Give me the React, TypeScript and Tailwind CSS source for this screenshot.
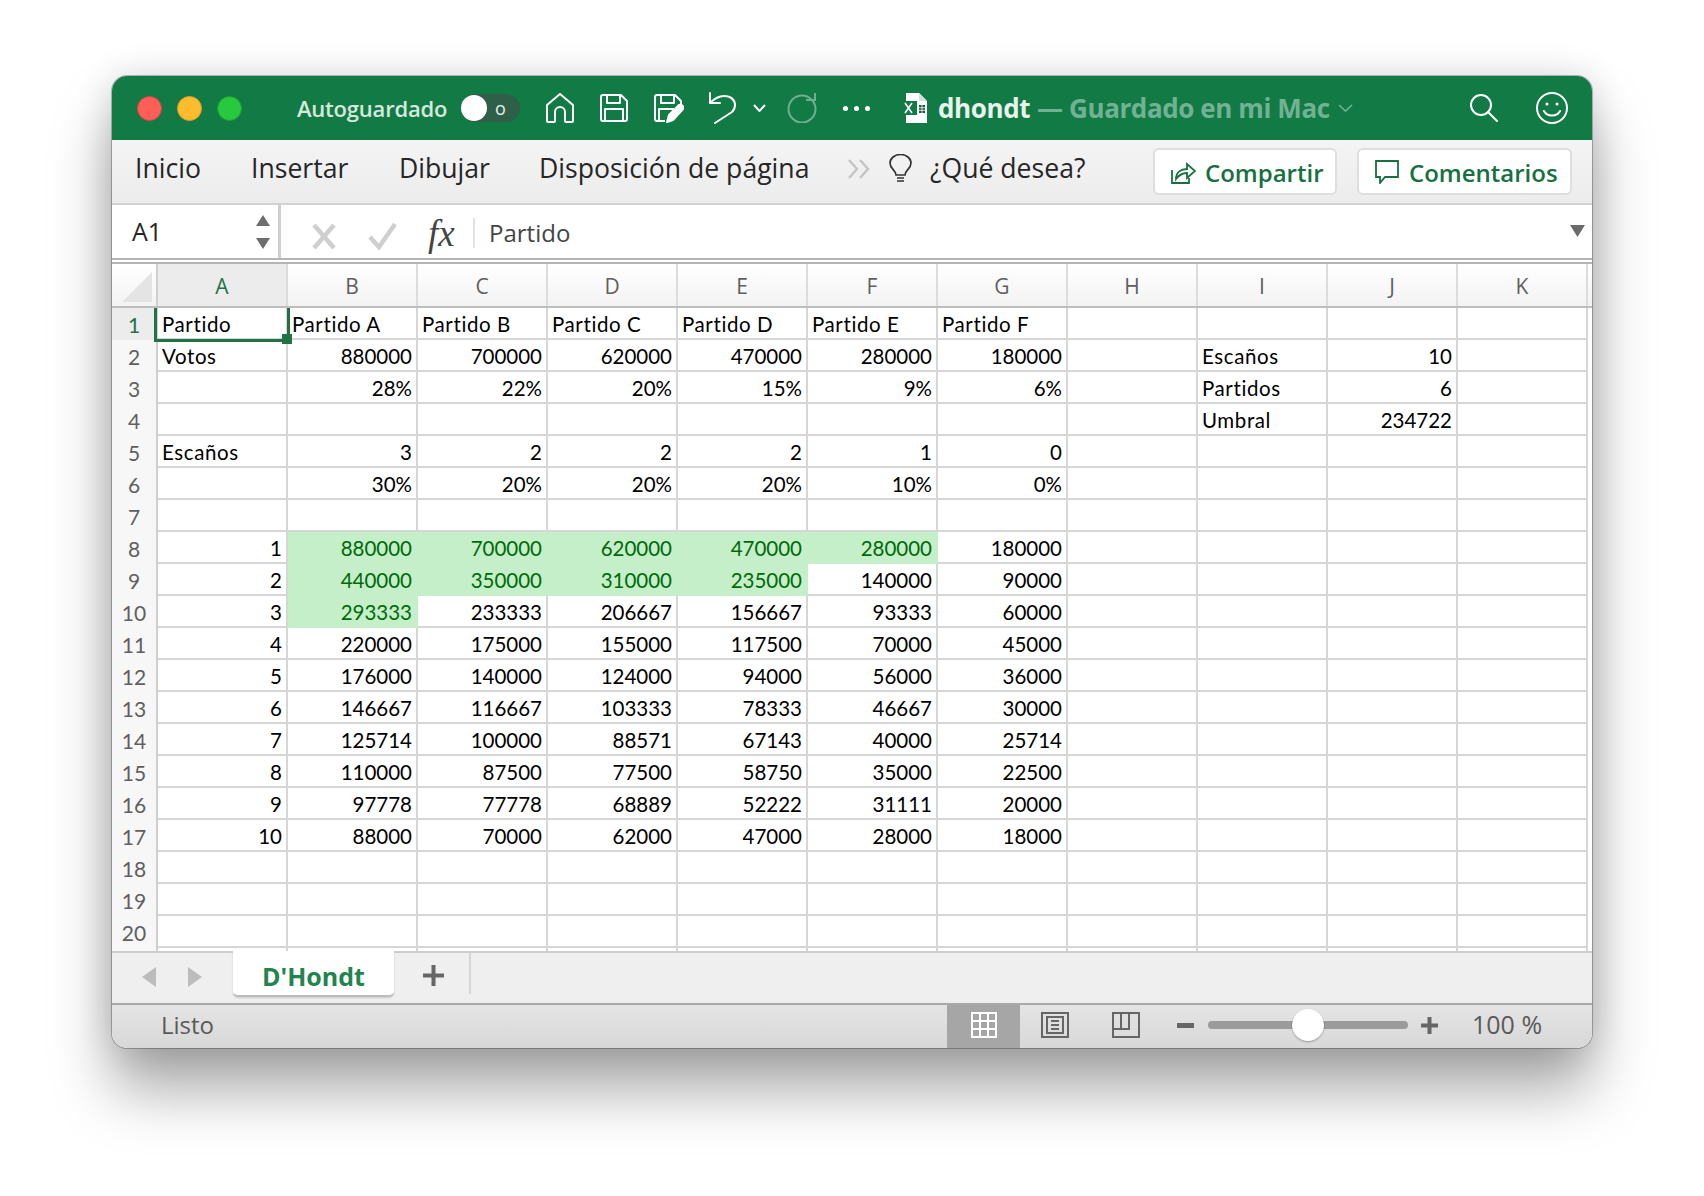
const columns = ["A", "B", "C", "D", "E", "F", "G", "H", "I", "J", "K"]

const rows: (string | number)[][] = [
  ["Partido", "Partido A", "Partido B", "Partido C", "Partido D", "Partido E", "Partido F", "", "", "", ""],
  ["Votos", 880000, 700000, 620000, 470000, 280000, 180000, "", "Escaños", 10, ""],
  ["", "28%", "22%", "20%", "15%", "9%", "6%", "", "Partidos", 6, ""],
  ["", "", "", "", "", "", "", "", "Umbral", 234722, ""],
  ["Escaños", 3, 2, 2, 2, 1, 0, "", "", "", ""],
  ["", "30%", "20%", "20%", "20%", "10%", "0%", "", "", "", ""],
  ["", "", "", "", "", "", "", "", "", "", ""],
  [1, 880000, 700000, 620000, 470000, 280000, 180000, "", "", "", ""],
  [2, 440000, 350000, 310000, 235000, 140000, 90000, "", "", "", ""],
  [3, 293333, 233333, 206667, 156667, 93333, 60000, "", "", "", ""],
  [4, 220000, 175000, 155000, 117500, 70000, 45000, "", "", "", ""],
  [5, 176000, 140000, 124000, 94000, 56000, 36000, "", "", "", ""],
  [6, 146667, 116667, 103333, 78333, 46667, 30000, "", "", "", ""],
  [7, 125714, 100000, 88571, 67143, 40000, 25714, "", "", "", ""],
  [8, 110000, 87500, 77500, 58750, 35000, 22500, "", "", "", ""],
  [9, 97778, 77778, 68889, 52222, 31111, 20000, "", "", "", ""],
  [10, 88000, 70000, 62000, 47000, 28000, 18000, "", "", "", ""],
  ["", "", "", "", "", "", "", "", "", "", ""],
  ["", "", "", "", "", "", "", "", "", "", ""],
  ["", "", "", "", "", "", "", "", "", "", ""],
]

// cells with the green "good" format, row index -> how many value columns
const highlighted: Record<number, number> = { 7: 5, 8: 4, 9: 1 }

function isRight(value: string | number) {
  return typeof value === "number" || value.endsWith("%")
}

function TitleBar() {
  return (
    <div className="flex h-[64px] items-center bg-[#127b45] text-white">
      <div className="ml-[25px] h-[25px] w-[25px] rounded-full border border-[#d9443c] bg-[#fb5f57]" />
      <div className="ml-[15px] h-[25px] w-[25px] rounded-full border border-[#dc9a2a] bg-[#fdbb2e]" />
      <div className="ml-[15px] h-[25px] w-[25px] rounded-full border border-[#1f9c35] bg-[#28c83f]" />
      <span className="ml-[55px] w-[150px] whitespace-nowrap text-[22px] font-semibold tracking-[-0.2px] text-[#d6e8de]">Autoguardado</span>
      <div className="ml-[14px] flex h-[28px] w-[59px] items-center rounded-full bg-[#2f5e49]">
        <div className="h-[26px] w-[26px] rounded-full bg-white" />
        <span className="ml-[8px] text-[18px] leading-none text-[#e6efe9]">o</span>
      </div>
      <svg className="ml-[26px]" width="28" height="30" viewBox="0 0 28 30" fill="none" stroke="#fff" strokeWidth="2" strokeLinejoin="round">
        <path d="M1 12 14 1l13 11v16a1 1 0 0 1-1 1h-6a1 1 0 0 1-1-1v-9a5 5 0 0 0-10 0v9a1 1 0 0 1-1 1H2a1 1 0 0 1-1-1z" />
      </svg>
      <svg className="ml-[26px]" width="28" height="28" viewBox="0 0 28 28" fill="none" stroke="#fff" strokeWidth="2" strokeLinejoin="round">
        <path d="M3 1h18l6 6v18a2 2 0 0 1-2 2H3a2 2 0 0 1-2-2V3a2 2 0 0 1 2-2z" />
        <path d="M7 1v8h13V1M5 27V15h18v12" />
      </svg>
      <svg className="ml-[26px]" width="30" height="30" viewBox="0 0 30 30" fill="none" stroke="#fff" strokeWidth="2" strokeLinejoin="round">
        <path d="M11 28H3a2 2 0 0 1-2-2V4a2 2 0 0 1 2-2h18l6 6v3" />
        <path d="M7 2v8h13V2M5 28V16h15" />
        <path d="M13 29l2-7L25 12a3 3 0 0 1 4 4L19 27z" fill="#fff" />
      </svg>
      <svg className="ml-[25px]" width="28" height="32" viewBox="0 0 28 32" fill="none" stroke="#fff" strokeWidth="2" strokeLinecap="round" strokeLinejoin="round">
        <path d="M1 1v10h10M1 11c4-4 8-7 14-7 7 0 11 4 11 9 0 3-1 5-3 7L6 31" />
      </svg>
      <svg className="ml-[16px]" width="13" height="8" viewBox="0 0 13 8" fill="none" stroke="#fff" strokeWidth="2">
        <path d="M1 1l5.500 6L12 1" />
      </svg>
      <svg className="ml-[21px]" width="30" height="30" viewBox="0 0 30 30" fill="none" stroke="#6fae8f" strokeWidth="2">
        <circle cx="15" cy="16" r="13.500" />
        <path d="M19 7h9V0" />
      </svg>
      <div className="ml-[26px] flex gap-[6px]">
        <div className="h-[5px] w-[5px] rounded-full bg-white" />
        <div className="h-[5px] w-[5px] rounded-full bg-white" />
        <div className="h-[5px] w-[5px] rounded-full bg-white" />
      </div>
      <svg className="ml-[32px]" width="25" height="30" viewBox="0 0 25 30">
        <path d="M4 0h13l8 8v22H4z" fill="#fff" />
        <path d="M17 0v8h8z" fill="#cfe3d8" />
        <rect x="0" y="8" width="15" height="14" fill="#127b45" />
        <path d="M3 10l7 10M10 10l-7 10" stroke="#fff" strokeWidth="1.600" />
        <rect x="17" y="12" width="6" height="8" fill="#1d5a3a" />
        <path d="M17 14.700h6M17 17.300h6M20 12v8" stroke="#fff" strokeWidth=".8" />
      </svg>
      <span className="ml-[11px] text-[26px] font-bold tracking-[-0.4px] text-[#e9f3ed]">dhondt</span>
      <span className="ml-[7px] whitespace-nowrap text-[26px] font-bold tracking-[-0.4px] text-[#72b294]">— Guardado en mi Mac</span>
      <svg className="ml-[8px]" width="15" height="8" viewBox="0 0 15 8" fill="none" stroke="#72b294" strokeWidth="1.600">
        <path d="M1 1l6.500 6L14 1" />
      </svg>
      <svg className="ml-[117px]" width="28" height="28" viewBox="0 0 28 28" fill="none" stroke="#fff" strokeWidth="2" strokeLinecap="round">
        <circle cx="11" cy="11" r="10" />
        <path d="M18 18l9 9" />
      </svg>
      <svg className="ml-[38px]" width="32" height="32" viewBox="0 0 32 32" fill="none" stroke="#fff" strokeWidth="2" strokeLinecap="round">
        <circle cx="16" cy="16" r="15" />
        <path d="M8 19c3 6 13 6 16 0" />
        <circle cx="11" cy="12" r="1.500" fill="#fff" stroke="none" />
        <circle cx="21" cy="12" r="1.500" fill="#fff" stroke="none" />
      </svg>
    </div>
  )
}

function Ribbon() {
  return (
    <div className="flex h-[65px] items-center border-b-[2px] border-[#d2d2d2] bg-gradient-to-b from-[#f4f4f4] to-[#ececec] text-[26.600px] font-medium text-[#262626]">
      <div className="mb-[5px] flex items-center">
        <span className="ml-[23px] w-[66px] whitespace-nowrap">Inicio</span>
        <span className="ml-[50px] w-[96px] whitespace-nowrap">Insertar</span>
        <span className="ml-[52px] w-[88px] whitespace-nowrap">Dibujar</span>
        <span className="ml-[52px] w-[270px] whitespace-nowrap">Disposición de página</span>
        <svg className="ml-[38px]" width="24" height="20" viewBox="0 0 24 20" fill="none" stroke="#c4c4c4" strokeWidth="2.400">
          <path d="M2 1l8 9-8 9M13 1l8 9-8 9" />
        </svg>
        <svg className="ml-[18px]" width="23" height="30" viewBox="0 0 23 30" fill="none" stroke="#333" strokeWidth="1.700">
          <path d="M7 21c0-5-6-6-6-12a10.500 8.500 0 0 1 21 0c0 6-6 7-6 12z" />
          <path d="M8 24h7M8 27h7" />
        </svg>
        <span className="ml-[18px] w-[155px] whitespace-nowrap">¿Qué desea?</span>
      </div>
      <div className="ml-[68px] flex h-[47px] w-[184px] items-center rounded-[6px] border-2 border-[#dedede] bg-white pl-[16px] text-[24px] font-semibold text-[#17703f]">
        <svg width="25" height="24" viewBox="0 0 25 24" fill="none" stroke="#17703f" strokeWidth="1.800">
          <path d="M1 10v13h17v-5" />
          <path d="M5 19c0-7 5-10 11-10V4l8 7-8 7v-5c-5 0-8 2-11 6z" />
        </svg>
        <span className="ml-[9px] mt-[3px] whitespace-nowrap">Compartir</span>
      </div>
      <div className="ml-[20px] flex h-[47px] w-[215px] items-center rounded-[6px] border-2 border-[#dedede] bg-white pl-[16px] text-[24px] font-semibold text-[#17703f]">
        <svg width="24" height="24" viewBox="0 0 24 24" fill="none" stroke="#17703f" strokeWidth="1.800">
          <path d="M1 1h22v16H10l-5 6v-6H1z" />
        </svg>
        <span className="ml-[10px] mt-[3px] whitespace-nowrap">Comentarios</span>
      </div>
    </div>
  )
}

function FormulaBar() {
  return (
    <>
      <div className="flex h-[53px] items-stretch bg-white">
        <div className="flex w-[169px] items-center border-r-[3px] border-[#cfcfcf] pl-[20px] text-[25px] text-[#262626]">
          <span>A1</span>
          <div className="ml-auto mr-[8px] flex flex-col gap-[12px]">
            <svg width="14" height="11" viewBox="0 0 14 11"><path d="M7 0l7 11H0z" fill="#6e6e6e" /></svg>
            <svg width="14" height="11" viewBox="0 0 14 11"><path d="M7 11l7-11H0z" fill="#6e6e6e" /></svg>
          </div>
        </div>
        <div className="flex flex-1 items-center pl-[31px]">
          <svg className="mt-[10px]" width="24" height="27" viewBox="0 0 24 27" fill="none" stroke="#cfcfcf" strokeWidth="4.500">
            <path d="M2 2l20 23M22 2L2 25" />
          </svg>
          <svg className="ml-[32px] mt-[9px]" width="29" height="28" viewBox="0 0 29 28" fill="none" stroke="#cfcfcf" strokeWidth="4.500">
            <path d="M2 15l9 10L27 2" />
          </svg>
          <span className="ml-[31px] mt-[3px] w-[31px] whitespace-nowrap font-['Liberation_Serif',serif] text-[37px] italic leading-none text-[#444]">fx</span>
          <div className="ml-[14px] mt-[3px] h-[30px] w-[2px] bg-[#e2e2e2]" />
          <span className="ml-[14px] mt-[3px] text-[24px] text-[#444]">Partido</span>
          <svg className="mb-[1px] ml-auto mr-[7px]" width="15" height="12" viewBox="0 0 15 12"><path d="M0 0h15l-7.500 12z" fill="#6b6b6b" /></svg>
        </div>
      </div>
      <div className="h-[6px] border-y-2 border-[#b4b4b4] bg-white" />
    </>
  )
}

function HeaderRow() {
  return (
    <div className="flex h-[44px] border-b-[2px] border-[#bdbdbd] bg-gradient-to-b from-white to-[#f3f3f3] text-[21px] text-[#5f5f5f]">
      <div className="flex w-[46px] items-end justify-end border-r-2 border-[#cfcfcf] pb-[4px] pr-[4px]">
        <svg width="30" height="30" viewBox="0 0 30 30"><path d="M30 0v30H0z" fill="#e4e4e4" /></svg>
      </div>
      {columns.map((c, i) => (
        <div
          key={c}
          className={`flex w-[130px] items-center justify-center border-r-2 border-[#dcdcdc] pt-[4px] ${i === 0 ? "bg-[#ececec] text-[#217346]" : ""}`}
        >
          {c}
        </div>
      ))}
    </div>
  )
}

function Row({ cells, index }: { cells: (string | number)[]; index: number }) {
  const greenCols = highlighted[index] ?? 0
  return (
    <div className="flex h-[32px]">
      <div
        className={`flex w-[46px] items-center justify-center border-r-2 border-[#cfcfcf] text-[21px] leading-none ${
          index === 0 ? "bg-[#ececec] text-[#217346]" : "bg-[#f7f7f7] text-[#5f5f5f]"
        }`}
      >
        {index + 1}
      </div>
      {cells.map((value, i) => {
        const green = i >= 1 && i <= greenCols
        const right = isRight(value)
        return (
          <div
            key={i}
            className={`flex w-[130px] items-center overflow-visible whitespace-nowrap border-b-2 border-r-2 px-[4px] pt-[3px] leading-none ${
              right ? "justify-end" : "justify-start tracking-[0.6px]"
            } ${green ? "border-transparent bg-[#c4efc9] text-[#006a0a]" : "border-[#d6d6d6] text-black"}`}
          >
            {value}
          </div>
        )
      })}
    </div>
  )
}

function TabBar() {
  return (
    <div className="flex h-[52px] items-start border-t-2 border-[#cdcdcd] bg-[#efefef]">
      <div className="ml-[30px] mt-[14px] flex gap-[32px]">
        <svg width="14" height="20" viewBox="0 0 14 20"><path d="M14 0v20L0 10z" fill="#bcbcbc" /></svg>
        <svg width="14" height="20" viewBox="0 0 14 20"><path d="M0 0v20l14-10z" fill="#bcbcbc" /></svg>
      </div>
      <div className="relative -top-[2px] ml-[31px] flex h-[46px] w-[161px] items-center justify-center rounded-b-[5px] border-b-2 border-[#bdbdbd] bg-white pt-[8px] text-[25px] font-bold text-[#23834f] shadow-[0_1px_2px_rgba(0,0,0,0.15)]">
        D'Hondt
      </div>
      <svg className="ml-[29px] mt-[12px]" width="21" height="21" viewBox="0 0 21 21"><path d="M8.500 0h4v8.500H21v4h-8.500V21h-4v-8.500H0v-4h8.500z" fill="#666" /></svg>
      <div className="ml-[25px] h-[41px] w-[2px] bg-[#d6d6d6]" />
    </div>
  )
}

function StatusBar() {
  return (
    <div className="flex h-[45px] items-center border-t-2 border-[#a9a9a9] bg-gradient-to-b from-[#e4e4e4] to-[#d8d8d8] pb-[3px] text-[#5a5a5a]">
      <span className="ml-[49px] w-[60px] text-[24px]">Listo</span>
      <div className="-mb-[3px] ml-[726px] flex h-[43px] w-[73px] items-center justify-center self-stretch bg-[#a6a6a6] pb-[3px]">
        <svg width="26" height="26" viewBox="0 0 26 26" fill="none" stroke="#fff" strokeWidth="2">
          <rect x="1" y="1" width="24" height="24" />
          <path d="M9 1v24M17 1v24M1 9h24M1 17h24" />
        </svg>
      </div>
      <svg className="ml-[21px]" width="28" height="26" viewBox="0 0 28 26" fill="none" stroke="#666" strokeWidth="2">
        <rect x="1" y="1" width="26" height="24" />
        <rect x="6" y="5" width="16" height="16" />
        <path d="M10 9h8M10 13h8M10 17h8" />
      </svg>
      <svg className="ml-[43px]" width="28" height="26" viewBox="0 0 28 26" fill="none" stroke="#666" strokeWidth="2">
        <rect x="1" y="1" width="26" height="24" />
        <path d="M9 1v16M17 1v16M1 17h16V1" />
      </svg>
      <div className="ml-[37px] h-[5px] w-[17px] bg-[#666]" />
      <div className="relative ml-[14px] h-[8px] w-[200px] rounded-full bg-[#9b9b9b]">
        <div className="absolute left-[84px] top-[-12px] h-[32px] w-[32px] rounded-full bg-white shadow-[0_1px_2px_rgba(0,0,0,0.3)]" />
      </div>
      <svg className="ml-[13px]" width="17" height="17" viewBox="0 0 17 17"><path d="M6.500 0h4v6.500H17v4h-6.500V17h-4v-6.500H0v-4h6.500z" fill="#666" /></svg>
      <span className="ml-[34px] whitespace-nowrap text-[25px]">100 %</span>
    </div>
  )
}

export default function App() {
  return (
    <div className="h-[1196px] w-[1704px] overflow-hidden bg-white pl-[112px] pt-[76px] font-['Open_Sans',sans-serif]">
      <div className="h-[972px] w-[1480px] overflow-hidden rounded-[15px] bg-white shadow-[0_0_0_1px_rgba(0,0,0,0.25),0_0_36px_rgba(0,0,0,0.14),0_42px_60px_rgba(0,0,0,0.34)]">
        <TitleBar />
        <Ribbon />
        <FormulaBar />
        <HeaderRow />
        <div className="relative h-[643px] overflow-hidden bg-white font-['Lato',sans-serif] text-[20.500px]">
          {rows.map((cells, i) => (
            <Row key={i} cells={cells} index={i} />
          ))}
          <div className="flex h-[3px]">
            <div className="w-[46px] border-r-2 border-[#cfcfcf] bg-[#f7f7f7]" />
            {columns.map((c) => (
              <div key={c} className="w-[130px] border-r-2 border-[#d6d6d6]" />
            ))}
          </div>
          <div className="absolute left-[42px] top-[-4px] h-[38px] w-[136px] border-[3px] border-[#217346]" />
          <div className="absolute left-[170px] top-[26px] h-[10px] w-[10px] bg-[#217346]" />
        </div>
        <TabBar />
        <StatusBar />
      </div>
    </div>
  )
}
